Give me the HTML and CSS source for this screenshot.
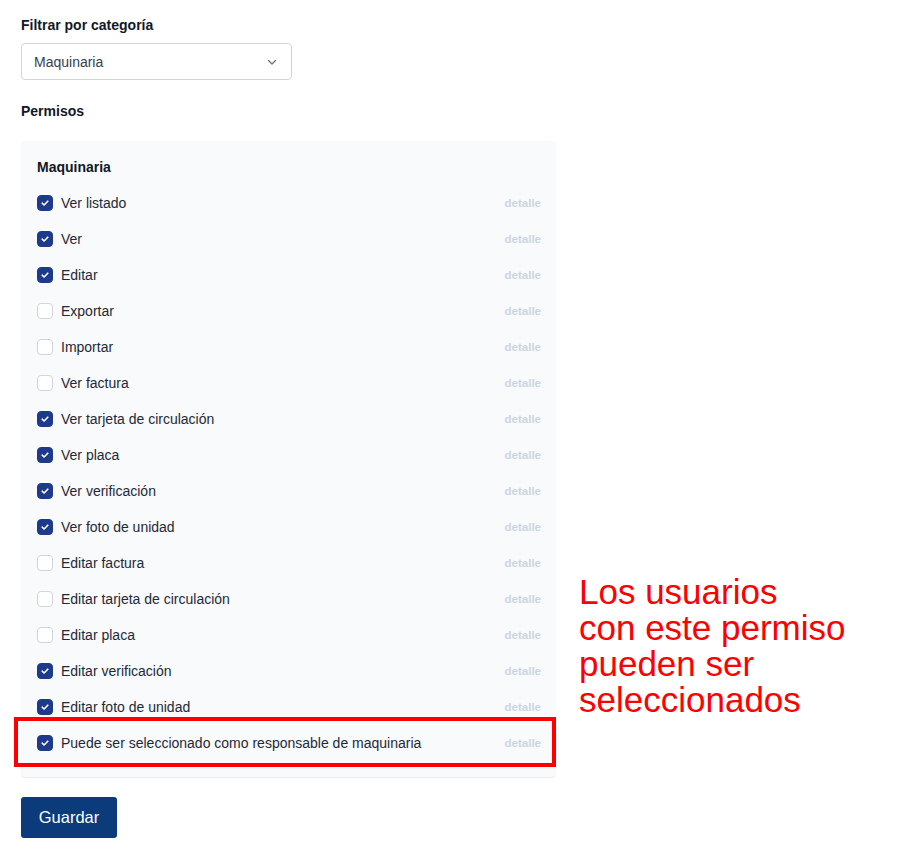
FILE: index.html
```html
<!DOCTYPE html>
<html lang="es">
<head>
    <meta charset="UTF-8">
    <meta name="viewport" content="width=device-width, initial-scale=1.0">
    <title>Permisos</title>
    <link rel="stylesheet" href="styles.css">
</head>
<body>
    <div class="page">
        <label class="field-label" for="categoria">Filtrar por categoría</label>
        <div class="select">
            <span>Maquinaria</span>
            <svg class="chevron" width="12" height="12" viewBox="0 0 12 12"><path d="M2.5 4.5 6 8l3.5-3.5" fill="none" stroke="#6b7280" stroke-width="1.3" stroke-linecap="round" stroke-linejoin="round"/></svg>
        </div>

        <div class="section-label">Permisos</div>

        <div class="perm-wrap">
            <div class="panel">
                <div class="panel-title">Maquinaria</div>
                <ul class="perm-list" id="perm-list"></ul>
            </div>
            <div class="highlight"></div>
            <div class="note">Los usuarios<br>con este permiso<br>pueden ser<br>seleccionados</div>
        </div>

        <button class="btn">Guardar</button>
    </div>

    <script>
        const permisos = [
            ['Ver listado', true],
            ['Ver', true],
            ['Editar', true],
            ['Exportar', false],
            ['Importar', false],
            ['Ver factura', false],
            ['Ver tarjeta de circulación', true],
            ['Ver placa', true],
            ['Ver verificación', true],
            ['Ver foto de unidad', true],
            ['Editar factura', false],
            ['Editar tarjeta de circulación', false],
            ['Editar placa', false],
            ['Editar verificación', true],
            ['Editar foto de unidad', true],
            ['Puede ser seleccionado como responsable de maquinaria', true]
        ];

        const list = document.getElementById('perm-list');
        for (const [name, on] of permisos) {
            const li = document.createElement('li');
            li.className = 'perm-row';
            li.innerHTML =
                '<span class="check' + (on ? ' on' : '') + '">' +
                (on ? '<svg width="10" height="10" viewBox="0 0 10 10"><path d="M2.2 5.2 4.1 7 7.8 3.2" fill="none" stroke="#fff" stroke-width="1.6" stroke-linecap="round" stroke-linejoin="round"/></svg>' : '') +
                '</span><span class="perm-name">' + name + '</span><span class="detail">detalle</span>';
            list.appendChild(li);
        }
    </script>
</body>
</html>
```

FILE: styles.css
```css
/* Permisos page */
body {
    margin: 0;
    font-family: "Liberation Sans", Arial, sans-serif;
    color: #111827;
    background-color: #fff;
}

.page {
    padding: 15px 21px;
}

.field-label {
    display: block;
    font-size: 14px;
    line-height: 20px;
    font-weight: bold;
    margin-bottom: 8px;
}

.select {
    width: 271px;
    height: 37px;
    box-sizing: border-box;
    border: 1px solid #d1d5db;
    border-radius: 4px;
    display: flex;
    align-items: center;
    justify-content: space-between;
    padding: 0 13px 0 12px;
    font-size: 14px;
    color: #374151;
}

.section-label {
    font-size: 14px;
    line-height: 20px;
    font-weight: bold;
    margin-top: 21px;
    margin-bottom: 20px;
}

.perm-wrap {
    position: relative;
}

.panel {
    width: 535px;
    box-sizing: border-box;
    background-color: #f8fafc;
    border-radius: 4px;
    box-shadow: 0 1px 1px rgba(0, 0, 0, 0.08);
    padding: 16px 16px 16px;
}

.panel-title {
    font-size: 14px;
    line-height: 20px;
    font-weight: bold;
    margin-bottom: 8px;
}

.perm-list {
    list-style: none;
    margin: 0;
    padding: 0;
}

.perm-row {
    height: 36px;
    display: flex;
    align-items: center;
    font-size: 14px;
    color: #1f2937;
}

.check {
    width: 16px;
    height: 16px;
    box-sizing: border-box;
    border: 1px solid #d1d5db;
    border-radius: 4px;
    background-color: #fff;
    margin-right: 8px;
    display: flex;
    align-items: center;
    justify-content: center;
}

.check.on {
    background-color: #1e3a8a;
    border-color: #1e3a8a;
}

.perm-name {
    flex: 1;
}

.detail {
    font-size: 11.5px;
    font-weight: bold;
    color: #cbd5e1;
    margin-right: -1px;
}

.highlight {
    position: absolute;
    left: -7px;
    top: 576px;
    width: 542px;
    height: 50px;
    box-sizing: border-box;
    border: 4px solid #ff0000;
}

.note {
    position: absolute;
    left: 558px;
    top: 433px;
    font-size: 35px;
    line-height: 36px;
    color: #ff0000;
}

.btn {
    margin-top: 20px;
    width: 96px;
    height: 41px;
    border: none;
    border-radius: 3px;
    background-color: #0c3b7c;
    color: #fff;
    font-family: "Liberation Sans", Arial, sans-serif;
    font-size: 16.5px;
    cursor: pointer;
}
```
